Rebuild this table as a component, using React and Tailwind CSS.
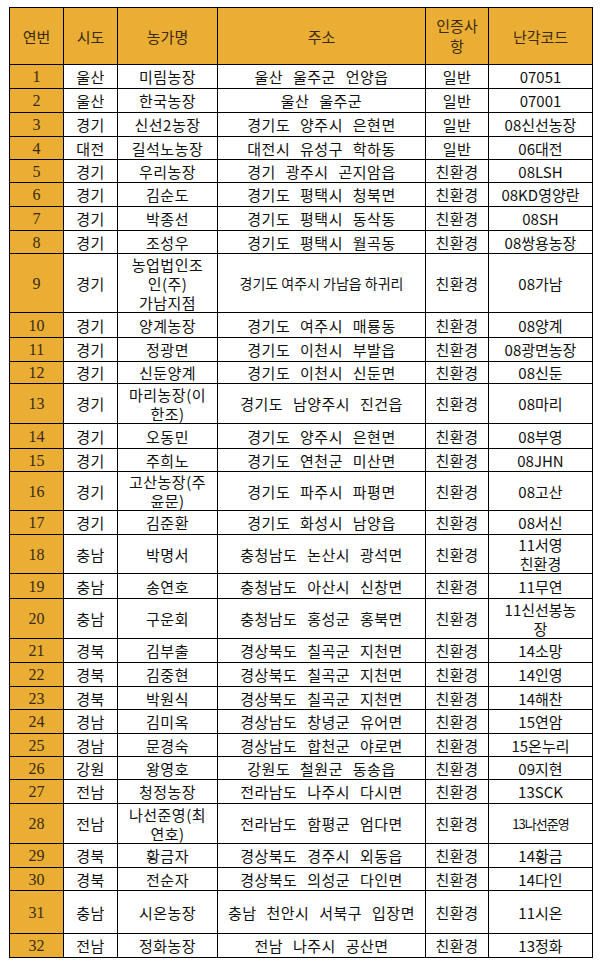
import React from "react";

const rows = [
  ["1", "울산", ["미림농장"], "울산 울주군 언양읍", "일반", ["07051"], "h-[24px]"],
  ["2", "울산", ["한국농장"], "울산 울주군", "일반", ["07001"], "h-[24px]"],
  ["3", "경기", ["신선2농장"], "경기도 양주시 은현면", "일반", ["08신선농장"], "h-[24px]"],
  ["4", "대전", ["길석노농장"], "대전시 유성구 학하동", "일반", ["06대전"], "h-[23px]"],
  ["5", "경기", ["우리농장"], "경기 광주시 곤지암읍", "친환경", ["08LSH"], "h-[23px]"],
  ["6", "경기", ["김순도"], "경기도 평택시 청북면", "친환경", ["08KD영양란"], "h-[24px]"],
  ["7", "경기", ["박종선"], "경기도 평택시 동삭동", "친환경", ["08SH"], "h-[24px]"],
  ["8", "경기", ["조성우"], "경기도 평택시 월곡동", "친환경", ["08쌍용농장"], "h-[23px]"],
  ["9", "경기", ["농업법인조", "인(주)", "가남지점"], "경기도 여주시 가남읍 하귀리", "친환경", ["08가남"], "h-[59px]"],
  ["10", "경기", ["양계농장"], "경기도 여주시 매룡동", "친환경", ["08양계"], "h-[25px]"],
  ["11", "경기", ["정광면"], "경기도 이천시 부발읍", "친환경", ["08광면농장"], "h-[24px]"],
  ["12", "경기", ["신둔양계"], "경기도 이천시 신둔면", "친환경", ["08신둔"], "h-[22px]"],
  ["13", "경기", ["마리농장(이", "한조)"], "경기도 남양주시 진건읍", "친환경", ["08마리"], "h-[40px]"],
  ["14", "경기", ["오동민"], "경기도 양주시 은현면", "친환경", ["08부영"], "h-[25px]"],
  ["15", "경기", ["주희노"], "경기도 연천군 미산면", "친환경", ["08JHN"], "h-[23px]"],
  ["16", "경기", ["고산농장(주", "윤문)"], "경기도 파주시 파평면", "친환경", ["08고산"], "h-[39px]"],
  ["17", "경기", ["김준환"], "경기도 화성시 남양읍", "친환경", ["08서신"], "h-[24px]"],
  ["18", "충남", ["박명서"], "충청남도 논산시 광석면", "친환경", ["11서영", "친환경"], "h-[39px]"],
  ["19", "충남", ["송연호"], "충청남도 아산시 신창면", "친환경", ["11무연"], "h-[25px]"],
  ["20", "충남", ["구운회"], "충청남도 홍성군 홍북면", "친환경", ["11신선봉농", "장"], "h-[40px]"],
  ["21", "경북", ["김부출"], "경상북도 칠곡군 지천면", "친환경", ["14소망"], "h-[24px]"],
  ["22", "경북", ["김중현"], "경상북도 칠곡군 지천면", "친환경", ["14인영"], "h-[24px]"],
  ["23", "경북", ["박원식"], "경상북도 칠곡군 지천면", "친환경", ["14해찬"], "h-[23px]"],
  ["24", "경남", ["김미옥"], "경상남도 창녕군 유어면", "친환경", ["15연암"], "h-[24px]"],
  ["25", "경남", ["문경숙"], "경상남도 합천군 야로면", "친환경", ["15온누리"], "h-[23px]"],
  ["26", "강원", ["왕영호"], "강원도 철원군 동송읍", "친환경", ["09지현"], "h-[23px]"],
  ["27", "전남", ["청정농장"], "전라남도 나주시 다시면", "친환경", ["13SCK"], "h-[24px]"],
  ["28", "전남", ["나선준영(최", "연호)"], "전라남도 함평군 엄다면", "친환경", ["13나선준영"], "h-[40px]"],
  ["29", "경북", ["황금자"], "경상북도 경주시 외동읍", "친환경", ["14황금"], "h-[24px]"],
  ["30", "경북", ["전순자"], "경상북도 의성군 다인면", "친환경", ["14다인"], "h-[23px]"],
  ["31", "충남", ["시온농장"], "충남 천안시 서북구 입장면", "친환경", ["11시온"], "h-[43px]"],
  ["32", "전남", ["정화농장"], "전남 나주시 공산면", "친환경", ["13정화"], "h-[24px]"],
];

function Lines({ items }) {
  return items.map((t, i) => (
    <React.Fragment key={i}>
      {i > 0 && <br />}
      {t}
    </React.Fragment>
  ));
}

export default function App() {
  const cell = "border border-black p-0 text-center align-middle";
  return (
    <div className="w-[600px] h-[966px] bg-white pt-[7px] pl-[9px] font-['Noto_Sans_CJK_KR','Noto_Sans',sans-serif] text-[#111]">
      <table className="table-fixed border-collapse w-[583px] text-[15px] leading-[19px]">
        <colgroup>
          <col className="w-[54px]" />
          <col className="w-[54px]" />
          <col className="w-[100px]" />
          <col className="w-[208px]" />
          <col className="w-[63px]" />
          <col className="w-[104px]" />
        </colgroup>
        <thead>
          <tr className="h-[57px] bg-[#eaae35] text-[#3a2a12]">
            <th className={`${cell} font-normal`}>연번</th>
            <th className={`${cell} font-normal`}>시도</th>
            <th className={`${cell} font-normal`}>농가명</th>
            <th className={`${cell} font-normal`}>주소</th>
            <th className={`${cell} font-normal leading-[20px]`}>
              인증사
              <br />항
            </th>
            <th className={`${cell} font-normal`}>난각코드</th>
          </tr>
        </thead>
        <tbody>
          {rows.map(([no, sido, name, addr, cert, code, h]) => (
            <tr key={no} className={h}>
              <td className={`${cell} bg-[#eaae35] text-[#3a2a12] font-['Liberation_Serif',serif] text-[16px]`}>{no}</td>
              <td className={`${cell} tracking-[0.5px]`}>{sido}</td>
              <td className={`${cell} tracking-[0.5px]`}>
                <Lines items={name} />
              </td>
              <td
                className={`${cell} whitespace-nowrap ${
                  no === "9" ? "text-[14px]" : "tracking-[0.5px] [word-spacing:6px]"
                }`}
              >
                {addr}
              </td>
              <td className={`${cell} tracking-[0.5px]`}>{cert}</td>
              <td
                className={`${cell} ${
                  no === "28" ? "text-[13px] tracking-[-1px]" : ""
                }`}
              >
                <Lines items={code} />
              </td>
            </tr>
          ))}
        </tbody>
      </table>
    </div>
  );
}
